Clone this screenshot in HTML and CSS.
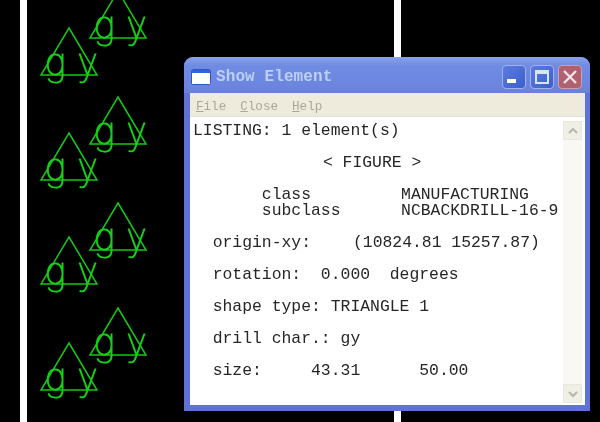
FILE: index.html
```html
<!DOCTYPE html>
<html lang="en">
<head>
<meta charset="utf-8">
<title>Show Element</title>
<link rel="stylesheet" href="styles.css">
</head>
<body>
<main class="desktop">
  <svg class="board" width="600" height="422" viewBox="0 0 600 422">
    <defs>
      <g id="drill">
        <path class="tri" d="M28 0 L56 47 L0 47 Z"/>
        <text class="drillchar" x="4" y="47">gy</text>
      </g>
    </defs>
    <rect class="trace" x="20" y="0" width="7" height="422"/>
    <rect class="trace" x="394" y="0" width="7" height="422"/>
    <use href="#drill" x="90" y="-9"/>
    <use href="#drill" x="41" y="28"/>
    <use href="#drill" x="90" y="97"/>
    <use href="#drill" x="41" y="133"/>
    <use href="#drill" x="90" y="203"/>
    <use href="#drill" x="41" y="237"/>
    <use href="#drill" x="90" y="308"/>
    <use href="#drill" x="41" y="343"/>
  </svg>

  <section class="window">
    <header class="titlebar">
      <svg class="appicon" width="20" height="16" viewBox="0 0 20 16">
        <rect x="0.5" y="0.5" width="19" height="15" rx="1" fill="#fff" stroke="#2f55c8"/>
        <rect x="1" y="1" width="18" height="3" fill="#2f62dc"/>
      </svg>
      <h1 class="title">Show Element</h1>
      <div class="controls">
        <button class="ctl ctl-min" aria-label="Minimize"><span class="min-bar"></span></button>
        <button class="ctl ctl-max" aria-label="Maximize"><span class="max-box"></span></button>
        <button class="ctl ctl-close" aria-label="Close">
          <svg width="16" height="16" viewBox="0 0 16 16"><path d="M2 2 L14 14 M14 2 L2 14" stroke="#f4e4e8" stroke-width="2.4" fill="none"/></svg>
        </button>
      </div>
    </header>
    <nav class="menubar">
      <span class="menu"><u>F</u>ile</span>
      <span class="menu"><u>C</u>lose</span>
      <span class="menu"><u>H</u>elp</span>
    </nav>
    <div class="client">
      <pre class="listing">LISTING: 1 element(s)

             <span class="nudge-2">&lt; FIGURE &gt;</span>

       class         <span class="nudge-1">MANUFACTURING</span>
       subclass      <span class="nudge-1">NCBACKDRILL-16-9</span>

  origin-xy:    <span class="nudge-3">(10824.81 15257.87)</span>

  rotation:  0.000  degrees

  shape type: TRIANGLE 1

  drill char.: gy

  size:     43.31      50.00</pre>
      <div class="scrollbar">
        <div class="arrow">
          <svg width="12" height="8" viewBox="0 0 12 8"><path d="M2 6 L6 2 L10 6" stroke="#b4b8ac" stroke-width="2" fill="none"/></svg>
        </div>
        <div class="arrow">
          <svg width="12" height="8" viewBox="0 0 12 8"><path d="M2 2 L6 6 L10 2" stroke="#b4b8ac" stroke-width="2" fill="none"/></svg>
        </div>
      </div>
    </div>
  </section>
</main>
</body>
</html>
```
FILE: styles.css
```css
* { box-sizing: border-box; }
html, body { margin: 0; padding: 0; background: #000; }
.desktop { position: relative; width: 600px; height: 422px; overflow: hidden; background: #000; }
.board { display: block; }
.trace { fill: #fff; }
.tri { fill: none; stroke: #14c814; stroke-width: 1.5; }
.drillchar {
  font-family: "Inter", "Roboto", sans-serif;
  font-weight: 100;
  font-size: 37px;
  letter-spacing: 11px;
  fill: #18d018;
  stroke: #18d018;
  stroke-width: 0.9;
}
.window {
  position: absolute;
  left: 184px;
  top: 57px;
  width: 406px;
  height: 354px;
  display: flex;
  flex-direction: column;
  padding: 0 5px 6px 6px;
  background: #6072d4;
  border-radius: 9px 9px 0 0;
  filter: blur(0.4px);
}
.titlebar {
  height: 36px;
  margin: 0 -5px 0 -6px;
  padding: 3px 4px 0 7px;
  display: flex;
  align-items: center;
  gap: 5px;
  border-radius: 9px 9px 0 0;
  background: linear-gradient(#8aa2ea 0, #6f8be2 25%, #6c86e0 80%, #6a7fdc 100%);
}
.appicon { flex: none; }
.title {
  margin: 0;
  font: bold 16px/1 "Liberation Mono", monospace;
  letter-spacing: 0.1px;
  color: #bed0f2;
}
.controls { margin-left: auto; display: flex; gap: 4px; padding-right: 4px; }
.ctl {
  width: 24px;
  height: 24px;
  padding: 0;
  display: flex;
  align-items: center;
  justify-content: center;
  border: 1px solid #9fb2ec;
  border-radius: 4px;
  background: linear-gradient(135deg, #5a7ce0, #3c5ecc);
}
.ctl-close { background: #b0606f; border-color: #c9a0b0; }
.min-bar { width: 9px; height: 4px; background: #fff; margin: 9px 6px 0 0; }
.max-box { width: 14px; height: 14px; border: 2px solid #d8e4fa; border-top-width: 4px; }
.menubar {
  height: 24px;
  display: flex;
  align-items: center;
  padding: 5px 0 0 6px;
  gap: 14px;
  background: #efebdc;
  border-bottom: 1px solid #dfe3dc;
}
.menu { font: 12.6px/1 "Liberation Mono", monospace; color: #a9a79c; }
.client { flex: 1; min-height: 0; display: flex; background: #fff; }
.listing {
  flex: 1;
  margin: 0;
  padding: 6px 0 0 3px;
  font: 16.4px/16px "Liberation Mono", monospace;
  color: #262626;
  overflow: hidden;
}
.nudge-1 { margin-left: 1.5px; }
.nudge-2 { margin-left: 2px; }
.nudge-3 { margin-left: 2.6px; }
.scrollbar {
  flex: none;
  width: 19px;
  margin: 4px 3px 2px 0;
  display: flex;
  flex-direction: column;
  justify-content: space-between;
  background: #f9f8f3;
}
.arrow {
  height: 19px;
  display: flex;
  align-items: center;
  justify-content: center;
  background: #f0efe6;
  border: 1px solid #e9e8dc;
}
```
